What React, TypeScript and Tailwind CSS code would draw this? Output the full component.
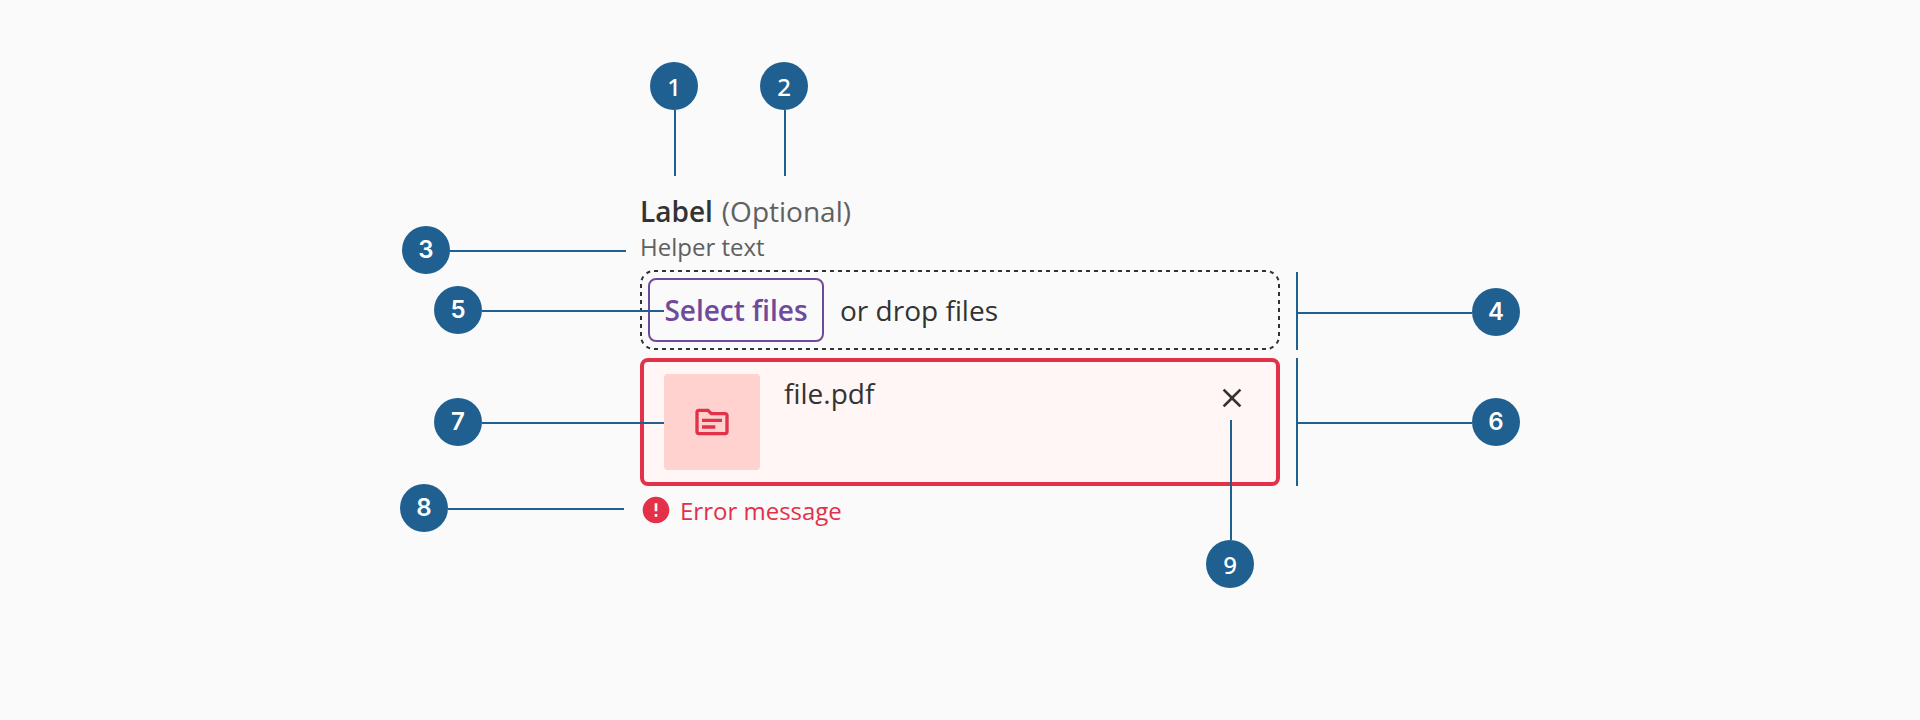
import { MdClose, MdError, MdOutlineSource } from "react-icons/md";

type CalloutProps = {
  label: string;
  place: string;
  font?: string;
  line: string;
  bracket?: string;
};

const SANS = "font-['Noto_Sans',sans-serif] font-medium pt-0.5";
const INTER = "font-['Inter',sans-serif] font-semibold";

function Callout({ label, place, font = INTER, line, bracket }: CalloutProps) {
  return (
    <div className={`absolute z-10 size-12 ${place}`}>
      <div className={`flex size-12 items-center justify-center rounded-full bg-[#1f6091] text-2xl text-white antialiased ${font}`}>
        {label}
      </div>
      <div className={`absolute bg-[#1f6091] ${line}`} />
      {bracket && <div className={`absolute w-0.5 bg-[#1f6091] ${bracket}`} />}
    </div>
  );
}

function Callouts() {
  return (
    <>
      <Callout label="1" place="left-[650px] top-[62px]" font={SANS} line="left-6 top-12 h-[66px] w-0.5" />
      <Callout label="2" place="left-[760px] top-[62px]" font={SANS} line="left-6 top-12 h-[66px] w-0.5" />
      <Callout label="3" place="left-[402px] top-[226px]" line="left-12 top-6 h-0.5 w-44" />
      <Callout
        label="4"
        place="left-[1472px] top-[288px]"
        line="right-12 top-6 h-0.5 w-[174px]"
        bracket="-left-44 -top-4 h-[78px]"
      />
      <Callout label="5" place="left-[434px] top-[286px]" line="left-12 top-6 h-0.5 w-[182px]" />
      <Callout
        label="6"
        place="left-[1472px] top-[398px]"
        line="right-12 top-6 h-0.5 w-[174px]"
        bracket="-left-44 -top-10 h-32"
      />
      <Callout label="7" place="left-[434px] top-[398px]" line="left-12 top-6 h-0.5 w-[182px]" />
      <Callout label="8" place="left-[400px] top-[484px]" line="left-12 top-6 h-0.5 w-44" />
      <Callout label="9" place="left-[1206px] top-[540px]" font={SANS} line="bottom-12 left-6 h-[120px] w-0.5" />
    </>
  );
}

function Dropzone() {
  return (
    <div className="relative flex h-20 items-center px-2">
      <svg className="absolute inset-0 size-full" fill="none" stroke="#333333" strokeWidth="2" aria-hidden="true">
        <path d="M14 1H626M14 79H626M1 14V66M639 14V66" strokeDasharray="4 4" />
        <path
          d="M1 14A13 13 0 0 1 14 1M626 1A13 13 0 0 1 639 14M639 66A13 13 0 0 1 626 79M14 79A13 13 0 0 1 1 66"
          strokeDasharray="0 4 4 4.42 4 4"
        />
      </svg>
      <button className="h-16 w-44 rounded-lg border-2 border-[#6f4a9b] text-[28px] font-semibold whitespace-nowrap text-[#6f4a9b]">
        Select files
      </button>
      <span className="ml-4 text-[28px] text-[#333333]">or drop files</span>
    </div>
  );
}

function FileCard() {
  return (
    <div className="mt-2 flex h-32 gap-6 rounded-lg border-4 border-[#e23148] bg-[#fff6f5] py-3 pr-7 pl-5">
      <div className="flex size-24 items-center justify-center rounded bg-[#ffd2cf]">
        <MdOutlineSource className="size-10 text-[#e23148]" />
      </div>
      <span className="flex-1 text-[28px] leading-[38px] text-[#333333]">file.pdf</span>
      <MdClose className="mt-2 size-8 text-[#333333]" />
    </div>
  );
}

export default function App() {
  return (
    <main className="relative h-[720px] w-[1920px] overflow-hidden bg-[#fafafa] font-['Open_Sans','Noto_Sans',sans-serif]">
      <section className="flex flex-col pt-[191px] pl-[640px]">
        <div className="flex w-[640px] flex-col">
          <div className="flex h-10 items-center gap-[9px] text-[28px] leading-10">
            <span className="font-semibold text-[#333333]">Label</span>
            <span className="text-[#606060]">(Optional)</span>
          </div>
          <div className="h-[39px] text-2xl leading-8 text-[#606060]">Helper text</div>
          <Dropzone />
          <FileCard />
          <div className="mt-2 flex h-8 items-center gap-2 text-[#e23148]">
            <MdError className="size-8" />
            <span className="pt-0.5 text-2xl leading-8">Error message</span>
          </div>
        </div>
      </section>
      <Callouts />
    </main>
  );
}
